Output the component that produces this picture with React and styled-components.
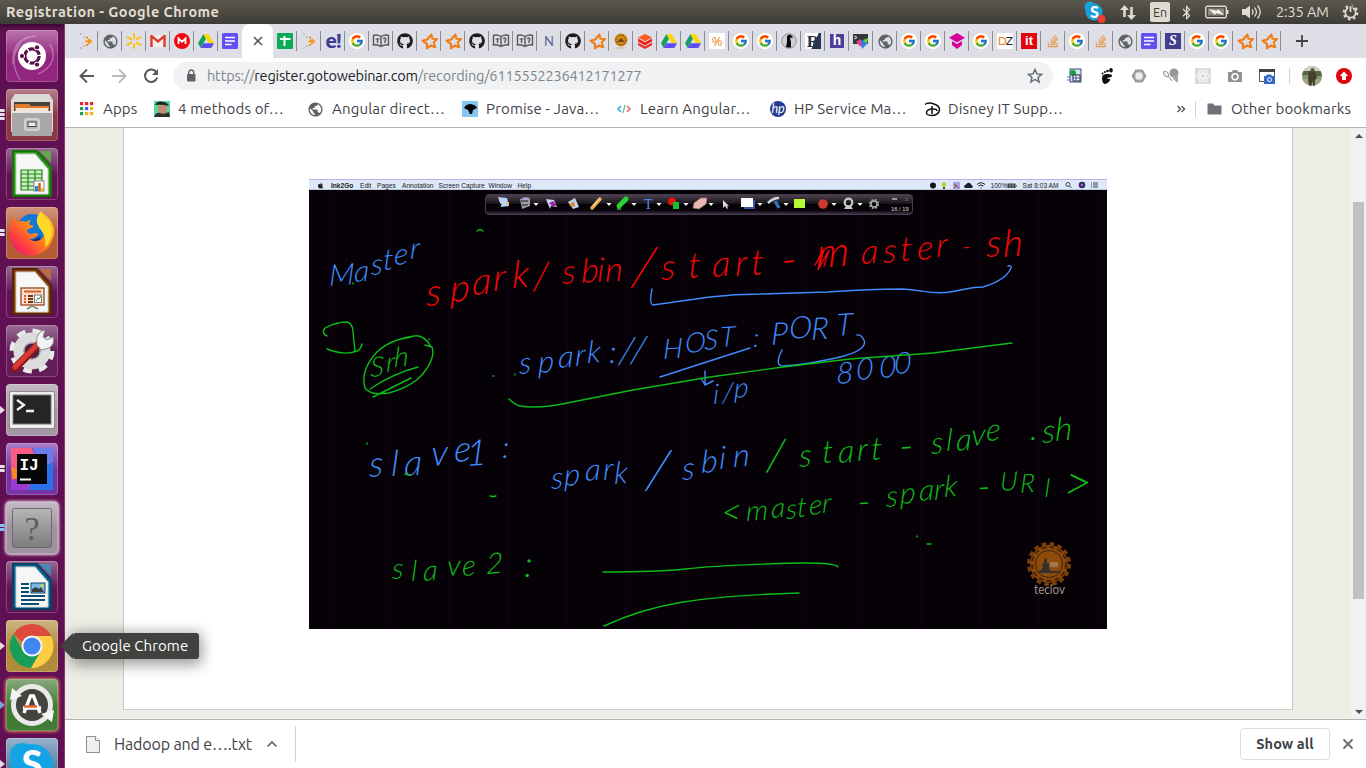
import React from "react";
import styled, { createGlobalStyle } from "styled-components";
import { FaGithub, FaStackOverflow, FaApple, FaBluetoothB } from "react-icons/fa";
import { MdPublic } from "react-icons/md";
import { FcGoogle } from "react-icons/fc";

const ui = `"Ubuntu", "Open Sans", "Noto Sans", sans-serif`;
const RED = "#f40606";
const BLUE = "#3f8cff";
const GREEN = "#0cbc18";

const GlobalStyle = createGlobalStyle`
  * { box-sizing: border-box; }
  body { margin: 0; overflow: hidden; font-family: ${ui}; }
  svg { display: block; flex: none; }
`;

const Screen = styled.div`
  width: 1366px; height: 768px; display: flex; flex-direction: column; overflow: hidden; background: #fff;
`;
const Panel = styled.header`
  height: 24px; flex: none; display: flex; align-items: center; justify-content: space-between;
  padding: 0 7px 0 6px; background: linear-gradient(#5b584d, #3d3c37); color: #e2ddd2;
`;
const PanelTitle = styled.span`font-size: 14.5px; font-weight: 700; line-height: 22px; letter-spacing: 0.42px; white-space: nowrap;`;
const Indicators = styled.div`display: flex; align-items: center; height: 24px;`;
const Indicator = styled.span`display: flex; margin-right: ${p => p.$gap}px; position: relative;`;
const Lang = styled.span`
  width: 20px; height: 20px; border-radius: 2px; background: #dfdbd2; color: #3c3b37; font-size: 12.5px; line-height: 20px; text-align: center; margin-right: 9px;
`;
const Clock = styled.span`font-size: 14.5px; letter-spacing: -0.1px; line-height: 22px; width: 54px; white-space: nowrap; margin-right: 12px;`;

const Body = styled.div`flex: 1; display: flex; min-height: 0;`;
const Launcher = styled.nav`
  width: 65px; flex: none; padding: 6px 0 0 6px; display: flex; flex-direction: column; gap: 7px; overflow: hidden;
  background: linear-gradient(#3d0734 0, #5f1052 6px, #620f54 100%); border-right: 1px solid #7c3d70; position: relative;
`;
const Tile = styled.div`
  width: 52px; height: 52px; flex: none; border-radius: 4px; display: flex; align-items: center; justify-content: center; position: relative;
  background: linear-gradient(rgba(255,255,255,.36), rgba(255,255,255,.08) 42%, rgba(255,255,255,0) 50%), ${p => p.$bg};
  box-shadow: inset 0 0 0 1px rgba(255,255,255,.22)${p => (p.$glow ? `, 0 0 3px 1px ${p.$glow}` : "")};
`;
const Pips = styled.div`
  position: absolute; left: -6px; top: ${p => (p.$n === 3 ? 20 : 22)}px; display: flex; flex-direction: column; gap: 1px;
`;
const Pip = styled.i`width: 5px; height: 3px; border-radius: 0 2px 2px 0; background: ${p => p.$c};`;
const Arrow = styled.i`border: 4px solid transparent; border-left: 5px solid ${p => p.$c}; border-right: 0;`;

const Browser = styled.main`flex: 1; min-width: 0; display: flex; flex-direction: column; background: #fff;`;
const TabStrip = styled.div`height: 34px; flex: none; display: flex; padding-left: 9px; background: #dedee6;`;
const Tab = styled.div`
  width: ${p => (p.$active ? 31 : 24)}px; height: 34px; display: flex; align-items: center; justify-content: center; flex: none;
  background: ${p => (p.$active ? "#fff" : "none")}; border-radius: 8px 8px 0 0; position: relative;
  ${p => p.$line && "&::after { content: ''; position: absolute; right: 0; top: 7px; width: 1px; height: 20px; background: #8b8b90; }"}
`;
const Square = styled.span`
  width: ${p => p.$w || 16}px; height: ${p => p.$w || 16}px; background: ${p => p.$bg}; color: ${p => p.$c || "#fff"}; font: ${p => p.$f}; text-align: center;
  letter-spacing: ${p => p.$ls || 0}px; display: block; white-space: nowrap;
`;
const Orange = styled.span`color: #ee7f22;`;
const GoogleDisc = styled.span`width: 16px; height: 16px; border-radius: 50%; background: #fff; display: flex; align-items: center; justify-content: center;`;
const NewTab = styled.div`width: 42px; display: flex; align-items: center; justify-content: center;`;

const Toolbar = styled.div`height: 35px; flex: none; display: flex; align-items: center; padding: 0 13px 0 14px;`;
const NavButtons = styled.div`display: flex; gap: 14px; width: 94px;`;
const Omnibox = styled.div`
  width: 880px; height: 28px; border-radius: 14px; background: #f0f2f4; display: flex; align-items: center; padding: 0 10px 0 12px; margin-top: 1px;
`;
const Url = styled.span`
  flex: 1; margin-left: 10px; font-size: 14.5px; letter-spacing: -0.17px; line-height: 20px; color: #7f8388; white-space: nowrap;
  b { font-weight: 400; color: #202124; }
`;
const Extensions = styled.div`flex: 1; display: flex; align-items: center; gap: 16px; padding-left: 14px;`;
const Avatar = styled.svg`margin: 0 -2px 0 0;`;
const Divider = styled.i`width: 1px; height: 16px; background: #cfd1d4; margin: ${p => p.$m || 0};`;

const Bookmarks = styled.div`
  height: 35px; flex: none; display: flex; align-items: center; padding: 0 14px 2px 14px; border-bottom: 1px solid #b2b2b4;
`;
const Bookmark = styled.div`display: flex; align-items: center; width: ${p => p.$w}px; flex: none;`;
const Label = styled.span`margin-left: ${p => p.$gap || 8}px; font-size: 15px; color: #3f4247; letter-spacing: ${p => p.$ls || 0.16}px; line-height: 20px; white-space: nowrap;`;

const Viewport = styled.div`flex: 1; min-height: 0; display: flex;`;
const Page = styled.section`flex: 1; background: #ecede5; padding: 0 58px 9px 58px; display: flex;`;
const Sheet = styled.div`flex: 1; background: #fff; border: 1px solid #c9c9c9; border-top: 0; padding: 51px 0 0 185px;`;
const Scrollbar = styled.div`
  width: 15px; flex: none; background: #f1f1f1; display: flex; flex-direction: column; align-items: center; padding: 6px 0 5px;
`;
const Thumb = styled.i`width: 11px; height: 397px; margin: 64px 0 auto; background: #c1c1c1;`;
const Tri = styled.i`border: 4px solid transparent; ${p => (p.$up ? "border-top: 0; border-bottom: 4px solid #505050;" : "border-bottom: 0; border-top: 4px solid #505050;")}`;

const Video = styled.div`
  width: 798px; height: 450px; display: flex; flex-direction: column; position: relative; background-color: #060106;
  background-image: repeating-linear-gradient(90deg, transparent 0 21px, rgba(70,0,70,.1) 21px 23px, transparent 23px 37px, rgba(0,40,10,.12) 37px 38px, transparent 38px 59px);
`;
const MacBar = styled.div`
  height: 11px; flex: none; display: flex; align-items: center; padding: 1px 8px 0 8px; background: #dde8f8; border-top: 1px solid #b9aef0; border-bottom: 1px solid #bfcadb;
  font-family: "Liberation Sans", Arial, sans-serif; font-size: 6.6px; color: #1c2026; line-height: 9px;
`;
const MacItem = styled.span`width: ${p => p.$w}px; font-weight: ${p => (p.$b ? 700 : 400)}; white-space: nowrap; display: flex; flex: none;`;
const InkBar = styled.div`
  width: 428px; height: 21px; margin: 4px 0 0 176px; flex: none; border: 1px solid #453b4b; border-radius: 4px;
  background: linear-gradient(#4b414d 0, #19141a 45%, #030103 50%, #09050b 82%, #40344a);
`;
const Board = styled.svg`position: absolute; left: 0; top: 0;`;

const Downloads = styled.footer`
  height: 49px; flex: none; border-top: 1px solid #b2b2b4; display: flex; align-items: center; background: #fff;
`;
const DownloadItem = styled.div`width: 231px; height: 36px; border-right: 1px solid #d3d4d8; display: flex; align-items: center; padding-left: 21px;`;
const FileName = styled.span`margin-left: 14px; width: 152px; font-size: 16px; letter-spacing: -0.15px; color: #3f4247; white-space: nowrap;`;
const ShowAll = styled.button`
  width: 90px; height: 32px; margin: 0 12px 0 auto; border: 1px solid #dadce0; border-radius: 4px; background: #fff; color: #3c4043; font: 600 14.5px ${ui}; letter-spacing: 0.1px; padding: 0 0 2px;
`;
const CloseBox = styled.div`width: 24px; display: flex;`;
const Tooltip = styled.div`
  position: absolute; left: 73px; top: 633px; width: 126px; height: 26px; border-radius: 3px; background: #41413f; color: #fff; font-size: 15px; letter-spacing: 0.08px; line-height: 25px; padding-left: 9px; white-space: nowrap;
  box-shadow: 0 3px 14px 3px rgba(0,0,0,.38); z-index: 2;
  &::before { content: ""; position: absolute; left: -13px; top: 0; border: 13px solid transparent; border-left: 0; border-right-color: #41413f; }
`;

/* ---- favicons ---- */
const Globe = () => <MdPublic size={17} color="#5f6368" />;
const Star = () => (
  <svg width="17" height="17" viewBox="0 0 17 17"><path d="M10.500 1.500l.8 4.300 4.700.2-3.200 3.200 1.400 5-4.400-1.800-4 3.100.3-4.600L1.500 7.800l4.800-1.300z" fill="none" stroke="#f07c12" strokeWidth="2" strokeLinejoin="round" /></svg>
);
const Book = () => (
  <svg width="18" height="16" viewBox="0 0 18 16"><path d="M1.500 2.500Q5 1 9 3.500 13 1 16.500 2.500V12Q13 11 9 13.500 5 11 1.500 12zM9 3.500v10M5.500 5v5M4.300 6.500v-1M6.800 6.500v-1M11.500 6q0-1.500 1.500-1t0 3.500v1.500" fill="none" stroke="#55585c" strokeWidth="1.400" /></svg>
);
const Drive = () => (
  <svg width="16" height="14" viewBox="0 0 16 14"><path d="M5.400 0L8 4.600 2.700 14 0 9.300z" fill="#13a05a" /><path d="M5.400 0h5.200L16 9.300h-5.300z" fill="#fdd50b" /><path d="M5.400 9.300H16L13.300 14H2.700z" fill="#5b4cf5" /></svg>
);
const Docs = () => (
  <svg width="16" height="16" viewBox="0 0 16 16"><rect width="16" height="16" rx="1.500" fill="#634df5" /><path d="M3 4.500h10M3 8h10M3 11.500h6.500" stroke="#fff" strokeWidth="1.700" /></svg>
);
const Chevy = () => (
  <svg width="14" height="16" viewBox="0 0 14 16"><g fill="#bfc1c6"><rect x="1" y="0" width="2" height="2" /><rect x="4" y="3" width="2" height="2" /><rect x="4" y="12" width="2" height="2" /><rect x="1" y="14" width="2" height="2" /></g><path d="M7 3.500h2v2.200h2.200v1.500H13v2.200h-2v1.800H9.200V13H7v-2.200h2V9.300H6.500V7.200H9V5.700H7z" fill="#f6961e" /></svg>
);
const Hat = () => <svg width="16" height="16" viewBox="0 0 16 16"><path d="M8 0l8 4.700L8 9.500 0 4.700zM3 8l5 3 5-3v4l-5 4-5-4z" fill="#d6009b" /></svg>;
const Layers = () => <svg width="16" height="16" viewBox="0 0 16 16"><path d="M8 1l7 3.500-7 3.800-7-3.800z" fill="#ff5a20" /><path d="M1 5.500l7 3.800 7-3.800v3l-7 4-7-4zM1 9.700l7 3.900 7-3.900V12l-7 4-7-4z" fill="#ec2315" /></svg>;
const Mandala = () => <svg width="16" height="16" viewBox="0 0 16 16"><circle cx="8" cy="7" r="6.500" fill="#d28b18" /><circle cx="8" cy="7" r="5" fill="none" stroke="#765012" strokeDasharray="2 1" /><path d="M4 9l4-4 4 4z" fill="#684918" /><path d="M4 15h8" stroke="#d4b57d" /></svg>;
const Bird = () => <svg width="16" height="16" viewBox="0 0 16 16"><circle cx="8" cy="8" r="7.300" fill="#ccd0d1" stroke="#777" strokeWidth=".7" /><path d="M6 3q3-3 5 0l1 2-3-.5 1 5v5H6l-1-1 1-4z" fill="#0a0a0a" /></svg>;
const Cmd = () => <svg width="16" height="16" viewBox="0 0 16 16"><rect y="1" width="15" height="10" fill="#34383a" /><path d="M1.500 3l2.500 1.500L1.500 6" stroke="#fff" fill="none" /><path d="M3 9l4-3 3 4-2 4z" fill="#ef3d78" /><path d="M8 7l4 1 2 3-5 5z" fill="#2a7df1" /><path d="M10 7l5-2-1 6z" fill="#72ce34" /></svg>;
const Walmart = () => <svg width="16" height="16" viewBox="0 0 16 16"><path d="M8 1v4M8 11v4M1.500 4.200l3.700 2.100M10.800 9.700l3.700 2.100M14.500 4.200l-3.700 2.100M5.200 9.700l-3.700 2.100" stroke="#fdc20a" strokeWidth="2" strokeLinecap="round" /></svg>;
const Gmail = () => <svg width="16" height="12" viewBox="0 0 16 12"><rect x="1" width="14" height="12" fill="#f3eeee" /><path d="M1.500 12V1L8 6.500 14.500 1v11" fill="none" stroke="#dd3b2e" strokeWidth="2.400" /></svg>;
const Mega = () => <svg width="16" height="16" viewBox="0 0 16 16"><circle cx="8" cy="8" r="8" fill="#ef0712" /><path d="M4.500 11V5.500L8 8.700l3.500-3.200V11" fill="none" stroke="#fff" strokeWidth="1.800" /></svg>;
const Sheets = () => <svg width="16" height="16" viewBox="0 0 16 16"><rect width="16" height="16" rx="1" fill="#0cab57" /><path d="M7.500 3v10M3 6h10.500" stroke="#fff" strokeWidth="2" /></svg>;

const marks = {
  chev: <Chevy />, globe: <Globe />, wal: <Walmart />, gmail: <Gmail />, mega: <Mega />, drive: <Drive />, docs: <Docs />, sheets: <Sheets />,
  e: <Square $bg="none" $c="#3d3a96" $f='700 20px/15px "Open Sans"' $ls={-1}>e!</Square>,
  g: <GoogleDisc><FcGoogle size={14} /></GoogleDisc>,
  book: <Book />, git: <FaGithub size={16} color="#191b1f" />, star: <Star />,
  n: <Square $bg="none" $c="#5a5f93" $f="400 13px/16px Lato">N</Square>,
  mandala: <Mandala />, layers: <Layers />,
  pct: <Square $bg="#fff" $c="#f08020" $f='400 13px/16px "Open Sans"'>%</Square>,
  bird: <Bird />,
  r: <Square $bg="linear-gradient(115deg,#fff 58%,#29374e 59%)" $c="#29374e" $f='700 17px/17px "Liberation Serif"'>R</Square>,
  h: <Square $w={14} $bg="#4a3f99" $f='700 14px/14px "Liberation Mono"'>h</Square>,
  cmd: <Cmd />, hat: <Hat />,
  dz: <Square $bg="#fff" $c="#222" $f="400 12px/16px Lato" $ls={-0.8}><Orange>D</Orange>Z</Square>,
  it: <Square $bg="#e3030b" $f='700 13px/15px "Liberation Sans"'>it</Square>,
  so: <FaStackOverflow size={14} color="#e9964c" />,
  s: <Square $bg="#443d8a" $f='italic 700 14px/15px "Liberation Serif"'>S</Square>,
};
const leftTabs = "chev globe wal gmail mega drive docs".split(" ");
const rightTabs = "sheets chev e g book git star star git book book n git star mandala layers drive drive pct g g bird r h cmd globe g g hat g dz it so g so globe docs s g g star star".split(" ");

/* ---- launcher icons ---- */
const Office = ({ c, d, light, children }) => (
  <svg width="40" height="48" viewBox="0 0 40 48"><path d="M1 1h24l14 16v29H1z" fill={c} stroke={d} strokeWidth="2" strokeLinejoin="round" /><path d="M4 4h19l13 15v25H4z" fill="#f7f7f7" stroke="#cfcfcf" /><path d="M28 1h11v12z" fill={light} opacity=".8" />{children}</svg>
);
const Dash = () => (
  <svg width="52" height="52" viewBox="0 0 52 52"><g fill="none" stroke="#fff" opacity=".3"><path d="M7 34Q5 8 30 6M44 14Q54 34 32 44M14 50Q2 30 14 14" strokeWidth="1.500" /></g><circle cx="26" cy="26" r="14" fill="#fff" /><circle cx="26" cy="26" r="7.200" fill="none" stroke="#5b1049" strokeWidth="3.200" strokeDasharray="13.500 1.600" /><g fill="#5b1049" stroke="#fff" strokeWidth="1"><circle cx="16" cy="26" r="2.600" /><circle cx="31" cy="17.400" r="2.600" /><circle cx="31" cy="34.600" r="2.600" /></g></svg>
);
const Files = () => (
  <svg width="44" height="46" viewBox="0 0 44 46"><path d="M5 2h34l4 6v32H1V8z" fill="#d9d9d7" /><path d="M4 10h36v11H4z" fill="#44413c" /><path d="M5 12h14l2 2h18v8H5z" fill="#e37b2e" /><path d="M6 16h32v3H6z" fill="#f8e1cb" /><rect x="2" y="19" width="40" height="25" rx="1" fill="#a8a8a6" /><path d="M2 20h40" stroke="#e8e8e8" strokeWidth="2" /><rect x="15" y="27" width="14" height="11" rx="2" fill="#b9b9b7" stroke="#ddd" strokeWidth="1.500" /><rect x="18" y="30" width="8" height="4.500" fill="#eee" stroke="#444" /></svg>
);
const Firefox = () => (
  <svg width="46" height="46" viewBox="0 0 46 46"><defs><linearGradient id="fx" x1="1" y1="0" x2="0" y2="1"><stop offset="0" stopColor="#ffe226" /><stop offset=".45" stopColor="#ff8a16" /><stop offset=".75" stopColor="#ff3647" /><stop offset="1" stopColor="#d6127e" /></linearGradient></defs><circle cx="23" cy="19" r="15" fill="#1278d8" /><path d="M14 26q8 8 18-1l-2 10-12 1z" fill="#1c2d7a" /><path d="M7 6q-1 5 1 6 5-2 9 0 3-2 5-2-3 4-1 5 4 0 3 2l-6 3q0 4 5 4 4-2 6 0-3 5-9 5 8 5 14-1 4-8-1-17 0-6-3-9Q39 5 43 13t1 15Q39 45 22 45.500 4 45 1 27-1 13 7 6z" fill="url(#fx)" /><path d="M28 8q2-5 4-7 3 7 8 10 7 15-4 27 2-10-4-18-5-6-4-12z" fill="#ffd92a" /></svg>
);
const Settings = () => (
  <svg width="46" height="46" viewBox="0 0 46 46"><circle cx="23" cy="23" r="19.500" fill="none" stroke="#e9e9e9" strokeWidth="6" strokeDasharray="8.300 7" /><circle cx="23" cy="23" r="13.500" fill="none" stroke="#dcdcdc" strokeWidth="10" /><circle cx="23" cy="23" r="8" fill="#4d2247" stroke="#bbb" /><path d="M6 40L30 16" stroke="#8f1717" strokeWidth="8" strokeLinecap="round" /><path d="M6 39L29 16" stroke="#d93c37" strokeWidth="5" strokeLinecap="round" /><path d="M28 17q-2-10 5-14l3-1-2 7 4 3 6-3q2 7-4 11l-8 2z" fill="#f3f3f3" stroke="#8d8d8d" /></svg>
);
const TerminalIcon = () => (
  <svg width="46" height="38" viewBox="0 0 46 38"><rect x=".5" y=".5" width="45" height="37" rx="1.500" fill="#eee" stroke="#8b8b88" /><rect x="4" y="4" width="38" height="29" fill="#242626" stroke="#777" /><path d="M8 9l7 5-7 5M17 20h8" fill="none" stroke="#f1f1f1" strokeWidth="2.300" /></svg>
);
const Idea = () => (
  <svg width="42" height="42" viewBox="0 0 42 42"><rect width="42" height="42" fill="#2a72ea" /><path d="M0 0h22L18 42H0z" fill="#d93697" /><path d="M0 0h20l5 8L6 24 0 16z" fill="#fb5a83" /><path d="M0 18l12 8-10 10z" fill="#fb8625" /><path d="M0 32l14-4 4 14H0z" fill="#9c3bd2" /><path d="M22 0h20v14L30 20z" fill="#6b7bea" /><rect x="6" y="6" width="30" height="30" fill="#050505" /><text x="8.500" y="22" fill="#fff" fontFamily="Liberation Mono" fontWeight="700" fontSize="16">IJ</text><path d="M9 31.500h11" stroke="#fff" strokeWidth="2" /></svg>
);
const Unknown = () => (
  <svg width="40" height="40" viewBox="0 0 40 40"><defs><linearGradient id="un" x2="0" y2="1"><stop stopColor="#b5b5b5" /><stop offset="1" stopColor="#7c7c7c" /></linearGradient></defs><rect x=".5" y=".5" width="39" height="39" rx="2" fill="url(#un)" stroke="#6b6b6b" /><text x="20" y="32" textAnchor="middle" fontFamily="Liberation Serif" fontSize="34" fill="#5d5d5d">?</text></svg>
);
const Chrome = () => (
  <svg width="46" height="46" viewBox="0 0 46 46"><path d="M23 1a22 22 0 0 1 19.500 12H23L13 19 4.500 11A22 22 0 0 1 23 1z" fill="#dd4a3c" /><path d="M4.500 11A22 22 0 0 0 22 45l10-17-9 5-10-6z" fill="#169e59" /><path d="M42 13H23l9 6v9L22 45A22 22 0 0 0 42 13z" fill="#ffcd42" /><circle cx="23" cy="23" r="10.500" fill="#f3f5f8" /><circle cx="23" cy="23" r="8.600" fill="#4384f3" /></svg>
);
const Updater = () => (
  <svg width="46" height="46" viewBox="0 0 46 46"><circle cx="23" cy="23" r="18.500" fill="#444541" stroke="#e9e9e7" strokeWidth="5" /><path d="M1 18L3 6l10 8zM45 28l-2 12-11-8z" fill="#f6f6f6" /><path d="M15 31l6.500-17h3L31 31M14 26h18" fill="none" stroke="#fff" strokeWidth="3.400" /><path d="M15 24.500h13" stroke="#e8642c" strokeWidth="2.500" /></svg>
);
const SkypeBig = () => (
  <svg width="48" height="48" viewBox="0 0 48 48"><circle cx="24" cy="25" r="21" fill="#14a4e6" /><circle cx="14" cy="15" r="12" fill="#14a4e6" /><text x="24" y="38" textAnchor="middle" fill="#fff" fontFamily="Lato" fontWeight="900" fontSize="38">S</text></svg>
);

const dock = [
  { bg: "#92257d", icon: <Dash /> },
  { bg: "#8a3742", icon: <Files />, n: 3 },
  { bg: "#601253", icon: <Office c="#2a9a17" d="#167308" light="#52c03a"><path d="M9 20h21v20H9z" fill="#cceec3" /><path d="M9 20h21v20H9zM9 24h21M9 28h21M9 32h21M9 36h21M16 20v20M23 20v20" fill="none" stroke="#218716" strokeWidth="1.200" /><rect x="22" y="31" width="10" height="10" fill="#fff" stroke="#888" /><path d="M24.500 41v-5" stroke="#2288d6" strokeWidth="3" /><path d="M27.500 41v-8" stroke="#d95a16" strokeWidth="2.500" /><path d="M30.500 41v-3" stroke="#e9b214" strokeWidth="2.500" /></Office> },
  { bg: "#b45c36", icon: <Firefox />, n: 2 },
  { bg: "#601253", icon: <Office c="#8d410d" d="#592604" light="#c77139"><rect x="9" y="20" width="23" height="17" fill="#faded0" stroke="#984518" strokeWidth="1.300" /><path d="M12 23.500h17" stroke="#d95f20" strokeWidth="2" /><path d="M12 28h2M12 31h2M12 34h2" stroke="#d95f20" strokeWidth="2" /><path d="M16 28h5M16 31h5M16 34h5" stroke="#7c310d" strokeWidth="2" /><rect x="22.500" y="27" width="7" height="7.500" fill="#fff" stroke="#777" /><path d="M24 33l2-3 1 1 2-3" fill="none" stroke="#219a2b" /><path d="M15 41l5-3 6 3" fill="none" stroke="#888" strokeWidth="1.600" /></Office> },
  { bg: "#621c58", icon: <Settings /> },
  { bg: "#a595a5", icon: <TerminalIcon />, arrow: "#e4dfe4" },
  { bg: "#7635a5", icon: <Idea />, n: 2 },
  { bg: "#a192a2", icon: <Unknown />, n: 2, pip: "#7ac4f2", glow: "#f4eaf2" },
  { bg: "#601253", icon: <Office c="#0b6593" d="#064363" light="#3298c0"><path d="M9 21h8M9 25h8M9 29h8M9 33h24M9 37h24M9 41h18" stroke="#0a4c70" strokeWidth="2" /><rect x="19" y="20" width="14" height="10" fill="#77bce8" stroke="#0a4c70" /><path d="M20 29v-3l4-2 3 2 2-2 3 5z" fill="#3a3d40" /><circle cx="30" cy="22.500" r="1.600" fill="#e0ca4a" /></Office> },
  { bg: "#b08b3b", icon: <Chrome />, arrow: "#e4dfe4" },
  { bg: "#427b35", icon: <Updater />, arrow: "#79a6dc", glow: "#e97a4a" },
  { bg: "#5a86ac", icon: <SkypeBig />, arrow: "#e4dfe4" },
];

/* ---- whiteboard: every word has one position per character ---- */
const words = [
  { t: "Master", c: BLUE, s: 30, x: [329, 354, 371, 383, 394, 410], y: [286, 282, 275, 270, 265, 259] },
  { t: "spark/", c: RED, s: 38, x: [426, 450, 472, 493, 512, 533], y: [306, 302, 295, 291, 288, 290] },
  { t: "sbin", c: RED, s: 34, x: [562, 581, 597, 605], y: [284, 283, 282, 282] },
  { t: "/", c: RED, s: 52, x: [631], y: [286], k: -12 },
  { t: "start", c: RED, s: 36, x: [661, 688, 712, 735, 751], y: [280, 278, 277, 276, 275] },
  { t: "-", c: RED, s: 44, x: [781], y: [275] },
  { t: "m", c: RED, s: 42, x: [816], y: [268] },
  { t: "aster", c: RED, s: 34, x: [861, 883, 900, 917, 936], y: [264, 263, 261, 260, 257] },
  { t: "-", c: RED, s: 24, x: [962], y: [255] },
  { t: "sh", c: RED, s: 38, x: [986, 1003], y: [257, 257] },
  { t: "spark:", c: BLUE, s: 31, x: [519, 538, 558, 575, 587, 609], y: [374, 373, 368, 366, 363, 363] },
  { t: "//", c: BLUE, s: 36, x: [618, 630], y: [364, 363], k: -10 },
  { t: "HOST", c: BLUE, s: 28, x: [663, 685, 704, 720], y: [359, 353, 350, 347] },
  { t: ":", c: BLUE, s: 26, x: [753], y: [347] },
  { t: "PORT", c: BLUE, s: 31, x: [771, 789, 811, 836], y: [345, 339, 340, 336] },
  { t: "i/p", c: BLUE, s: 28, x: [713, 722, 734], y: [404, 403, 398] },
  { t: "8000", c: BLUE, s: 30, x: [836, 856, 879, 894], y: [384, 380, 378, 374] },
  { t: "slave1", c: BLUE, s: 36, x: [369, 391, 404, 431, 454, 466], y: [477, 476, 476, 466, 462, 466] },
  { t: ":", c: BLUE, s: 30, x: [502], y: [458] },
  { t: "spark", c: BLUE, s: 31, x: [551, 564, 585, 603, 614], y: [489, 486, 481, 480, 484] },
  { t: "/", c: BLUE, s: 52, x: [645], y: [489], k: -12 },
  { t: "sbin", c: BLUE, s: 32, x: [682, 701, 719, 733], y: [480, 473, 469, 467] },
  { t: "/", c: GREEN, s: 43, x: [766], y: [471], k: -8 },
  { t: "start", c: GREEN, s: 32, x: [799, 822, 838, 857, 871], y: [467, 463, 463, 461, 460] },
  { t: "-", c: GREEN, s: 40, x: [899], y: [460] },
  { t: "slave", c: GREEN, s: 31, x: [931, 946, 956, 971, 986], y: [454, 451, 451, 446, 441] },
  { t: ".sh", c: GREEN, s: 33, x: [1030, 1042, 1055], y: [440, 443, 441] },
  { t: "<", c: GREEN, s: 36, x: [721], y: [525] },
  { t: "master", c: GREEN, s: 28, x: [746, 771, 786, 797, 809, 822], y: [521, 518, 519, 517, 515, 513] },
  { t: "-", c: GREEN, s: 38, x: [857], y: [515] },
  { t: "spark", c: GREEN, s: 30, x: [886, 900, 919, 934, 944], y: [507, 504, 501, 500, 497] },
  { t: "-", c: GREEN, s: 38, x: [977], y: [500] },
  { t: "URI", c: GREEN, s: 26, x: [1000, 1020, 1044], y: [491, 493, 497] },
  { t: ">", c: GREEN, s: 50, x: [1063], y: [501] },
  { t: "Srh", c: GREEN, s: 28, x: [370, 386, 394], y: [377, 372, 367] },
  { t: "slave2", c: GREEN, s: 29, x: [392, 411, 423, 447, 462, 486], y: [579, 581, 581, 576, 576, 574] },
  { t: ":", c: GREEN, s: 36, x: [524], y: [577] },
];
const strokes = [
  [RED, "M815 265L824 249L818 270L829 250L824 266"],
  [BLUE, "M652 289Q649 304 653 305L710 297Q735 294 760 294L827 292 Q870 289 900 289C925 290 932 295 950 292S970 287 983 287Q1006 280 1011 268Q1012 265 1008 266"],
  [BLUE, "M660 377L750 348M782 350Q774 366 783 366Q805 365 840 357Q868 350 864 340Q861 334 857 335M705 371V385M701 378L705 385 713 381"],
  [GREEN, "M509 399Q515 405 520 406Q540 409 567 403L633 390 710 377 783 367 850 359 933 353 1012 343"],
  [GREEN, "M477 231Q480 228 483 231M327 336Q321 333 325 328Q336 322 347 322Q353 324 353 332L355 351M327 349Q345 356 357 351Q361 349 362 344"],
  [GREEN, "M431 347Q424 334 414 336Q389 340 377 352Q360 370 365 388Q371 396 389 393Q411 387 422 375Q436 358 432 347L425 345M401 339L411 337M370 389Q392 374 418 367M373 397L411 378"],
  [GREEN, "M493 376h1M429 339v1M490 496q3 1 6 0M367 443v1M405 474l5 1M917 536v1M927 544h4M515 374v1M353 283v1"],
  [GREEN, "M603 572Q660 572 685 569T767 564Q835 561 838 567M604 626Q640 609 683 602T799 593"],
];

const caretXs = [536, 609, 634, 659, 686, 711, 760, 786, 834, 860];
const InkIcons = () => (
  <g>
    {caretXs.map(x => <path key={x} d={`M${x - 2.5} 203h5l-2.5 3z`} fill="#fff" />)}
    <path d="M498 197l9 1 2 8-8 1z" fill="#b9d3f5" /><path d="M505 203l4-1v3z" fill="#f2c535" /><path d="M498 201l4 4-3 2z" fill="#161616" />
    <path d="M520 199l5-2 5 1v8l-8 3z" fill="#9a9a9f" /><path d="M521 201h7M522 205h6" stroke="#1e1e22" /><path d="M523 198h5v2h-5z" fill="#b89bde" />
    <path d="M546 199l8 1 3 7-6-1-1 3z" fill="#c9d7f2" /><path d="M549 203l4-2 4 4-4 2z" fill="#9b27a5" />
    <path d="M568 202l7-4 4 9-6 2z" fill="#bcd3f3" /><path d="M569 205l5-4 1 5-3 1z" fill="#d88835" />
    <path d="M592 208l8-9" stroke="#f0aa55" strokeWidth="3.500" strokeLinecap="round" /><path d="M593 206l7-8" stroke="#ffe0a8" />
    <path d="M619 206l7-7" stroke="#29d237" strokeWidth="5" strokeLinecap="round" /><path d="M617 209h4" stroke="#17962b" strokeWidth="2" />
    <text x="644" y="209" fill="#4e90ee" fontFamily="Liberation Serif" fontSize="14">T</text>
    <circle cx="672" cy="201.500" r="4" fill="#e81111" /><path d="M673 202h6v7h-6z" fill="#11c432" />
    <path d="M694 203l7-5h6l-1 6-7 5-6-1z" fill="#ecb7b0" stroke="#a4746e" strokeWidth=".7" />
    <path d="M723 200v8l2-2 2 3 1-1-1-2h2z" fill="#d7d7d7" />
    <path d="M744 200h11v9h-11z" fill="#3954a8" /><path d="M741 198h12v9h-12z" fill="#fff" />
    <path d="M768 203q5-5 11-5" stroke="#cfd6dc" strokeWidth="2.500" fill="none" /><path d="M775 201l4 7" stroke="#2e73bb" strokeWidth="3.400" />
    <path d="M794 199h11v9h-11z" fill="#b6f739" /><circle cx="823" cy="204" r="4.800" fill="#cf382f" />
    <path d="M844 209l2-3h5l2 3z" fill="#c8c8c8" /><circle cx="848.500" cy="202.500" r="3.800" fill="none" stroke="#c8c8c8" strokeWidth="2.200" />
    <circle cx="874" cy="204" r="4.200" fill="none" stroke="#9b9b9b" strokeWidth="2" strokeDasharray="2 1.300" /><circle cx="874" cy="204" r="3" fill="none" stroke="#aaa" strokeWidth="1.500" />
    <path d="M892 199h5" stroke="#fff" /><path d="M905 198l3 3m0-3l-3 3" stroke="#777" strokeWidth=".7" />
    <text x="891" y="210.500" fill="#dcdcdc" fontFamily="Liberation Sans" fontSize="5.800">16 / 19</text>
  </g>
);
const Emblem = () => (
  <g>
    <circle cx="1049" cy="564" r="20.500" fill="none" stroke="#7d3f06" strokeWidth="3" strokeDasharray="4.700 3.350" />
    <circle cx="1049" cy="564" r="19" fill="#8b490a" /><circle cx="1049" cy="564" r="17" fill="none" stroke="#4a2608" strokeWidth="2" strokeDasharray="5 3" />
    <circle cx="1049" cy="564" r="13.500" fill="#8e4b0c" stroke="#3f250d" /><path d="M1037 571h24l-2 2h-19zM1040 571q2-3 3-3l-1-3q1-2 2-2 0-5 1.500-5t1.500 5q2 0 2 2v4l2 2z" fill="#34302c" /><path d="M1050 562h8v5h-8z" fill="#a4744a" />
    <text x="1034" y="594" fill="#a39386" fontFamily="Lato" fontWeight="400" fontSize="13.500" textLength="31" lengthAdjust="spacingAndGlyphs">teclov</text>
  </g>
);

const StatusIcons = () => (
  <svg width="64" height="9" viewBox="0 0 64 9"><circle cx="4" cy="4.500" r="3" fill="#15161c" /><circle cx="15" cy="3.500" r="2.200" fill="#b6cf2f" /><path d="M14 6h2v2h-2z" fill="#3c4a22" /><path d="M24 1h7v7h-7z" fill="#9aa8e4" /><path d="M25 3l5 4M25 7l3-3" stroke="#c62a49" /><path d="M36 7a2 2 0 0 1 1-3.600 3 3 0 0 1 5.500.6A1.700 1.700 0 0 1 43 7z" fill="#1d2128" /><path d="M48 3.500q4-3.500 8 0M49.500 5q2.500-2 5 0M52 6.500v1" fill="none" stroke="#1d2128" /></svg>
);
const Battery = () => (
  <svg width="10" height="9" viewBox="0 0 10 9"><rect x=".5" y="2.500" width="8" height="4.500" fill="#3a3e46" /><path d="M3 3v3.500M6 3v3.500" stroke="#bcc6d6" strokeWidth=".8" /><path d="M9.200 4v1.600" stroke="#3a3e46" /></svg>
);

const RunPips = ({ n, c = "#e4dfe4" }) => <Pips $n={n}>{Array.from({ length: n }, (_, i) => <Pip key={i} $c={c} />)}</Pips>;

export default function App() {
  return (
    <Screen>
      <GlobalStyle />
      <Panel>
        <PanelTitle>Registration - Google Chrome</PanelTitle>
        <Indicators>
          <Indicator $gap={13}><svg width="22" height="24" viewBox="0 0 22 24"><circle cx="10" cy="12" r="8.500" fill="#199fdb" /><circle cx="6" cy="7" r="5.500" fill="#199fdb" /><text x="10.500" y="17.500" textAnchor="middle" fill="#fff" fontFamily="Lato" fontWeight="900" fontSize="16">S</text><circle cx="17.500" cy="19" r="4" fill="#ef3d32" /></svg></Indicator>
          <Indicator $gap={13}><svg width="18" height="18" viewBox="0 0 18 18"><path d="M5.500 14V4M12.500 4v10" stroke="#dfdbd2" strokeWidth="2.600" /><path d="M1 7l4.500-5L10 7zM8 12l4.500 5 4.500-5z" fill="#dfdbd2" /></svg></Indicator>
          <Lang>En</Lang>
          <Indicator $gap={11}><FaBluetoothB size={15} color="#dfdbd2" /></Indicator>
          <Indicator $gap={12}><svg width="24" height="14" viewBox="0 0 24 14"><rect x=".8" y="1.300" width="20.500" height="11.400" rx="1.500" fill="none" stroke="#dfdbd2" strokeWidth="1.400" /><rect x="3" y="3.500" width="16" height="7" fill="#8e8b83" /><path d="M22.500 5v4" stroke="#dfdbd2" strokeWidth="2" /><path d="M4 4l8 2 1-2 6 6-8-2-1 2z" fill="#f5f1e8" /></svg></Indicator>
          <Indicator $gap={14}><svg width="21" height="16" viewBox="0 0 21 16"><path d="M1 5h3.500L9 1.500v13L4.500 11H1z" fill="#dfdbd2" /><path d="M11 5.500q2 2.500 0 5M13.500 3.500q4 4.500 0 9M16.500 1.500q5.500 6.500 0 13" fill="none" stroke="#dfdbd2" strokeWidth="1.300" /></svg></Indicator>
          <Clock>2:35 AM</Clock>
          <svg width="17" height="17" viewBox="0 0 17 17"><circle cx="8.500" cy="8.500" r="6.800" fill="none" stroke="#dfdbd2" strokeWidth="2.200" strokeDasharray="2.600 2.740" /><circle cx="8.500" cy="8.500" r="5.200" fill="none" stroke="#dfdbd2" strokeWidth="1.700" /><path d="M8.500 1v7" stroke="#47453f" strokeWidth="4" /><path d="M8.500 2v6" stroke="#dfdbd2" strokeWidth="1.800" /></svg>
        </Indicators>
      </Panel>
      <Body>
        <Launcher>
          {dock.map((d, i) => (
            <Tile key={i} $bg={d.bg} $glow={d.glow}>
              {d.n && <RunPips n={d.n} c={d.pip} />}
              {d.arrow && <Pips><Arrow $c={d.arrow} /></Pips>}
              {d.icon}
            </Tile>
          ))}
        </Launcher>
        <Tooltip>Google Chrome</Tooltip>
        <Browser>
          <TabStrip>
            {leftTabs.map((k, i) => <Tab key={i} $line={i < 6}>{marks[k]}</Tab>)}
            <Tab $active><svg width="10" height="10" viewBox="0 0 10 10"><path d="M1 1l8 8M9 1L1 9" stroke="#55595d" strokeWidth="1.600" /></svg></Tab>
            {rightTabs.map((k, i) => <Tab key={i} $line>{marks[k]}</Tab>)}
            <NewTab><svg width="12" height="12" viewBox="0 0 12 12"><path d="M6 0v12M0 6h12" stroke="#3f4246" strokeWidth="1.800" /></svg></NewTab>
          </TabStrip>
          <Toolbar>
            <NavButtons>
              <svg width="16" height="16" viewBox="0 0 16 16"><path d="M15 8H2M8 1.500L1.500 8 8 14.500" fill="none" stroke="#55595e" strokeWidth="1.900" /></svg>
              <svg width="20" height="16" viewBox="0 0 18 16"><path d="M2 8h13M9 1.500L15.500 8 9 14.500" fill="none" stroke="#b9bbbe" strokeWidth="1.900" /></svg>
              <svg width="16" height="16" viewBox="0 0 16 16"><path d="M13.500 4.500A6.200 6.200 0 1 0 14.200 9.500" fill="none" stroke="#55595e" strokeWidth="2" /><path d="M15 1v6H9z" fill="#55595e" /></svg>
            </NavButtons>
            <Omnibox>
              <svg width="12" height="14" viewBox="0 0 12 14"><rect x="2" y="5" width="8.500" height="7.500" rx="1" fill="#5f6368" /><path d="M3.700 6V3.500a2.500 2.500 0 0 1 5 0V6" fill="none" stroke="#5f6368" strokeWidth="1.400" /></svg>
              <Url>https://<b>register.gotowebinar.com</b>/recording/6115552236412171277</Url>
              <svg width="16" height="16" viewBox="0 0 16 16"><path d="M8 1.500l1.900 4.400 4.700.4-3.600 3.100 1.100 4.600L8 11.500 3.900 14 5 9.400 1.400 6.300l4.700-.4z" fill="none" stroke="#5f6368" strokeWidth="1.400" /></svg>
            </Omnibox>
            <Extensions>
              <svg width="16" height="16" viewBox="0 0 16 16"><rect x="3" y="1" width="11" height="13" fill="#d8e2ef" stroke="#38517a" /><circle cx="6" cy="5" r="3" fill="#1d9c45" /><path d="M6 7h7v6H6z" fill="#fff" stroke="#222" /><path d="M9 7v6M6 10h7" stroke="#324ca3" /><path d="M0 9h4M0 12h4" stroke="#5779c0" /></svg>
              <svg width="16" height="16" viewBox="-1.500 0 16 16"><g fill="#111"><ellipse cx="10.500" cy="2.300" rx="1.800" ry="2.300" /><circle cx="7" cy="3" r="1.300" /><circle cx="4.300" cy="4" r="1.100" /><circle cx="2" cy="5.500" r="1" /><path d="M1.500 10q0-4 5-4 5-.5 5 1.800 0 2-3 1.700-2 .3-1.500 1.500l2-.3q1.500 1-.5 3-2 2.300-4.500 2.300-2.500-1-2.500-6z" /></g></svg>
              <svg width="16" height="16" viewBox="0 0 16 16"><path d="M4.500 1.500h7L15.500 8l-4 6.500h-7L.5 8z" fill="#999" /><circle cx="8" cy="8" r="4" fill="#ededed" stroke="#c7c7c7" /></svg>
              <svg width="16" height="16" viewBox="0 0 16 16"><circle cx="11" cy="5" r="4.500" fill="#969696" /><path d="M9 8l6-1 0 8-4-3z" fill="#aaa" /><ellipse cx="3" cy="6" rx="2" ry="3" transform="rotate(-40 3 6)" fill="#eee" stroke="#999" /><path d="M5 8l4 5" stroke="#888" fill="none" /></svg>
              <svg width="16" height="16" viewBox="0 0 16 16"><rect width="16" height="16" fill="#dcdcdc" /><g fill="none" stroke="#f8f8f8"><ellipse cx="8" cy="8" rx="6.500" ry="2.500" /><ellipse cx="8" cy="8" rx="6.500" ry="2.500" transform="rotate(60 8 8)" /><ellipse cx="8" cy="8" rx="6.500" ry="2.500" transform="rotate(120 8 8)" /></g></svg>
              <svg width="16" height="16" viewBox="0 0 16 16"><path d="M1 4h3.500L6 2h4l1.500 2H15v10H1z" fill="#929292" /><circle cx="8" cy="8.700" r="3" fill="none" stroke="#fff" strokeWidth="1.500" /></svg>
              <svg width="16" height="16" viewBox="0 0 16 16"><path d="M.5 1.500h15v12H.5z" fill="#fff" stroke="#555" /><path d="M0 1h16v3H0z" fill="#414141" /><path d="M5 8h2l1-1.500h4L13 8h3v8H5z" fill="#3368c6" /><circle cx="10.500" cy="11.700" r="2" fill="none" stroke="#fff" /></svg>
              <Divider $m="0 -4px 0 -2px" />
              <Avatar width="20" height="20" viewBox="0 0 20 20"><defs><clipPath id="av"><circle cx="10" cy="10" r="10" /></clipPath></defs><g clipPath="url(#av)"><rect width="20" height="20" fill="#8c9674" /><path d="M0 0h20v5H0z" fill="#c7d2cc" /><path d="M0 5h7v4H0zM13 5h7v5h-7z" fill="#566549" /><path d="M0 13h20v7H0z" fill="#a5a185" /><path d="M7 5h6l2 7-2 2v6h-2v-5l-2 5H7l-1-8z" fill="#453f2c" /><circle cx="10.500" cy="4" r="2" fill="#674b36" /></g></Avatar>
              <svg width="16" height="16" viewBox="0 0 16 16"><circle cx="8" cy="8" r="8" fill="#dc060b" /><path d="M8 3.500l4.200 4.500H10v4H6V8H3.800z" fill="#fff" /></svg>
            </Extensions>
          </Toolbar>
          <Bookmarks>
            <Bookmark $w={75}>
              <svg width="15" height="14" viewBox="0 0 15 14">{["#e9252c", "#e9252c", "#e9252c", "#15a258", "#5353ec", "#f0b51d", "#15a258", "#f0b51d", "#f0b51d"].map((c, i) => <rect key={i} x={1 + (i % 3) * 5} y={Math.floor(i / 3) * 5} width="3.200" height="3.200" fill={c} />)}</svg>
              <Label $gap={9}>Apps</Label>
            </Bookmark>
            <Bookmark $w={153}>
              <svg width="16" height="16" viewBox="0 0 16 16"><rect width="16" height="16" fill="#58d79b" /><path d="M4 4h9v6q-2 4-5 4t-4-4z" fill="#c08f7a" /><path d="M1 4q2-5 9-3 4 1 5 4-7-2-14-1z" fill="#192822" /><path d="M0 16q2-5 6-4l3 1 6-2 1 5z" fill="#2d302c" /></svg>
              <Label>4 methods of…</Label>
            </Bookmark>
            <Bookmark $w={155}><Globe /><Label>Angular direct…</Label></Bookmark>
            <Bookmark $w={154}>
              <svg width="16" height="16" viewBox="0 0 16 16"><rect width="16" height="16" fill="#83c5ef" /><path d="M2 7q2-4 7-4 5 1 6 4l-4 2-1 4H8L6 9z" fill="#070707" /></svg>
              <Label>Promise - Java…</Label>
            </Bookmark>
            <Bookmark $w={154}>
              <svg width="16" height="16" viewBox="0 0 16 16"><path d="M5 5L2 8l3 3" fill="none" stroke="#30a7df" strokeWidth="1.500" /><path d="M9 4l-2 8" stroke="#54cc9b" strokeWidth="1.300" /><path d="M11 5l3 3-3 3" fill="none" stroke="#ef6161" strokeWidth="1.500" /></svg>
              <Label>Learn Angular…</Label>
            </Bookmark>
            <Bookmark $w={154}>
              <svg width="16" height="16" viewBox="0 0 16 16"><circle cx="8" cy="8" r="8" fill="#233a94" /><text x="1.500" y="12" fontFamily="Lato" fontStyle="italic" fontWeight="400" fontSize="12.500" fill="#fff">hp</text></svg>
              <Label>HP Service Ma…</Label>
            </Bookmark>
            <Bookmark $w={252}>
              <svg width="17" height="16" viewBox="0 0 17 16"><path d="M1 3.500Q4 1 10 3q6 2 5.500 6-1 5-7 5.500-5 0-6-2Q2 8 9 8q4 0 4 2M8 5v8" fill="none" stroke="#111" strokeWidth="1.500" /></svg>
              <Label $gap={7}>Disney IT Supp…</Label>
            </Bookmark>
            <svg width="10" height="10" viewBox="0 0 10 10"><path d="M1.500 2l3 3-3 3M5.500 2l3 3-3 3" fill="none" stroke="#4e5256" strokeWidth="1.400" /></svg>
            <Divider $m="0 11px 0 9px" />
            <svg width="15" height="14" viewBox="0 0 15 14"><path d="M.5 1.500h5.500l1.500 2h7V12.500H.5z" fill="#6e7276" /></svg>
            <Label $gap={9}>Other bookmarks</Label>
          </Bookmarks>
          <Viewport>
            <Page>
              <Sheet>
                <Video>
                  <MacBar>
                    <MacItem $w={14}><FaApple size={7} /></MacItem>
                    <MacItem $w={29} $b>Ink2Go</MacItem><MacItem $w={17}>Edit</MacItem><MacItem $w={25}>Pages</MacItem><MacItem $w={36.5}>Annotation</MacItem>
                    <MacItem $w={50}>Screen Capture</MacItem><MacItem $w={29}>Window</MacItem><MacItem $w={411}>Help</MacItem>
                    <MacItem $w={62}><StatusIcons /></MacItem>
                    <MacItem $w={32}>100%<Battery /></MacItem>
                    <MacItem $w={42}>Sat 8:03 AM</MacItem>
                    <svg width="34" height="8" viewBox="0 0 34 8"><circle cx="3" cy="3.500" r="2" fill="none" stroke="#222" strokeWidth=".8" /><path d="M4.500 5l2 2" stroke="#222" strokeWidth=".8" /><circle cx="17" cy="4" r="3.300" fill="#36276b" /><circle cx="17" cy="4" r="1.300" fill="#a86ac4" /><path d="M26 2h1M26 4h1M26 6h1M28 2h5M28 4h5M28 6h5" stroke="#222" strokeWidth=".8" /></svg>
                  </MacBar>
                  <InkBar />
                  <Board width="798" height="450" viewBox="309 179 798 450">
                    <InkIcons />
                    <g fontFamily="Lato" fontWeight="300" fontStyle="italic">
                      {words.map((w, i) => {
                        const [x0, y0] = [w.x[0], w.y[0]];
                        return (
                          <text key={i} transform={`translate(${x0} ${y0}) skewX(${w.k || -5})`} x={w.x.map((x, j) => x - x0 + (w.y[j] - y0) * 0.09).join(" ")} y={w.y.map(y => y - y0).join(" ")} fontSize={w.s} fill={w.c} rotate="-4">{w.t}</text>
                        );
                      })}
                    </g>
                    {strokes.map(([c, d], i) => <path key={i} d={d} fill="none" stroke={c} strokeWidth="1.400" strokeLinecap="round" />)}
                    <Emblem />
                  </Board>
                </Video>
              </Sheet>
            </Page>
            <Scrollbar><Tri $up /><Thumb /><Tri /></Scrollbar>
          </Viewport>
          <Downloads>
            <DownloadItem>
              <svg width="14" height="17" viewBox="0 0 14 17"><path d="M.5.5h9l4 4v12H.5z" fill="#efefef" stroke="#8f8f8f" /><path d="M9.500.5v4h4" fill="#fff" stroke="#8f8f8f" /></svg>
              <FileName>Hadoop and e….txt</FileName>
              <svg width="12" height="8" viewBox="0 0 12 8"><path d="M1.500 6.500L6 2l4.500 4.500" fill="none" stroke="#5f6368" strokeWidth="1.600" /></svg>
            </DownloadItem>
            <ShowAll>Show all</ShowAll>
            <CloseBox><svg width="12" height="12" viewBox="0 0 12 12"><path d="M1.500 1.500l9 9M10.500 1.500l-9 9" stroke="#6b6e72" strokeWidth="1.900" /></svg></CloseBox>
          </Downloads>
        </Browser>
      </Body>
    </Screen>
  );
}
